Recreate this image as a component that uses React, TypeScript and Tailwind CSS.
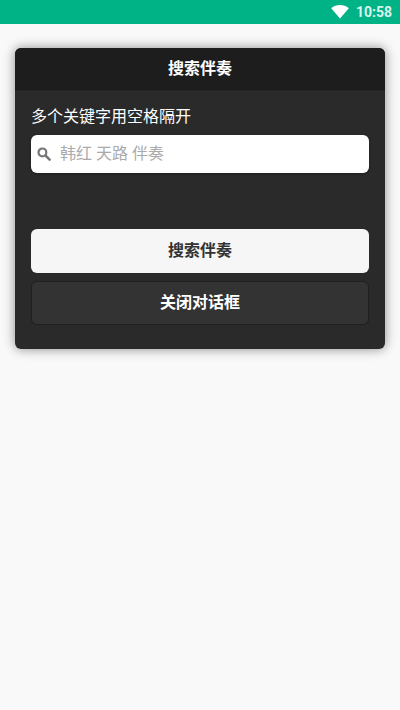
import React from 'react';

const cjk = "font-['Roboto','Noto_Sans_CJK_SC',sans-serif]";

function WifiIcon() {
  return (
    <svg width="18" height="14" viewBox="0 0 18 14" className="block">
      <path d="M9 13.5 0.2 3.2C2.6 1.2 5.6 0 9 0s6.4 1.2 8.8 3.2L9 13.5z" fill="#fff" />
    </svg>
  );
}

function SearchIcon() {
  return (
    <svg width="14" height="14" viewBox="0 0 14 14" fill="none" className="block">
      <circle cx="5.4" cy="5.4" r="3.9" stroke="#777" strokeWidth="2.2" />
      <path d="M8.6 8.6 12.6 12.6" stroke="#777" strokeWidth="2.6" strokeLinecap="round" />
    </svg>
  );
}

export default function App() {
  return (
    <div className={`w-[400px] h-[710px] bg-[#f9f9f9] flex flex-col overflow-hidden ${cjk}`}>
      <div className="h-6 bg-[#00b386] flex items-center justify-end pr-2 gap-[7px]">
        <WifiIcon />
        <span className="text-sm font-bold text-white/85">10:58</span>
      </div>

      <div className="mx-[15px] mt-6 h-[301px] bg-[#2a2a2a] rounded-md shadow-[0_0_12px_rgba(0,0,0,0.45)] overflow-hidden">
        <div className="h-[43px] bg-[#1d1d1d] border-b border-[#262626] flex items-center justify-center">
          <span className="text-base font-bold text-white">搜索伴奏</span>
        </div>

        <div className="px-4 flex flex-col">
          <div className="mt-[14px] h-6 flex items-center text-base text-white">多个关键字用空格隔开</div>

          <div className="mt-[6px] h-[38px] bg-white rounded-md flex items-center pl-[6px] gap-[9px] shadow-[0_1px_3px_rgba(0,0,0,0.3)]">
            <SearchIcon />
            <span className="text-base text-[#aaaaaa]">韩红 天路 伴奏</span>
          </div>

          <button className="mt-[56px] h-11 bg-[#f6f6f6] rounded-md text-base font-bold text-[#333333] flex items-center justify-center">
            搜索伴奏
          </button>

          <button className="mt-2 h-11 bg-[#333333] border border-[#1f1f1f] rounded-md text-base font-bold text-white flex items-center justify-center">
            关闭对话框
          </button>
        </div>
      </div>
    </div>
  );
}
